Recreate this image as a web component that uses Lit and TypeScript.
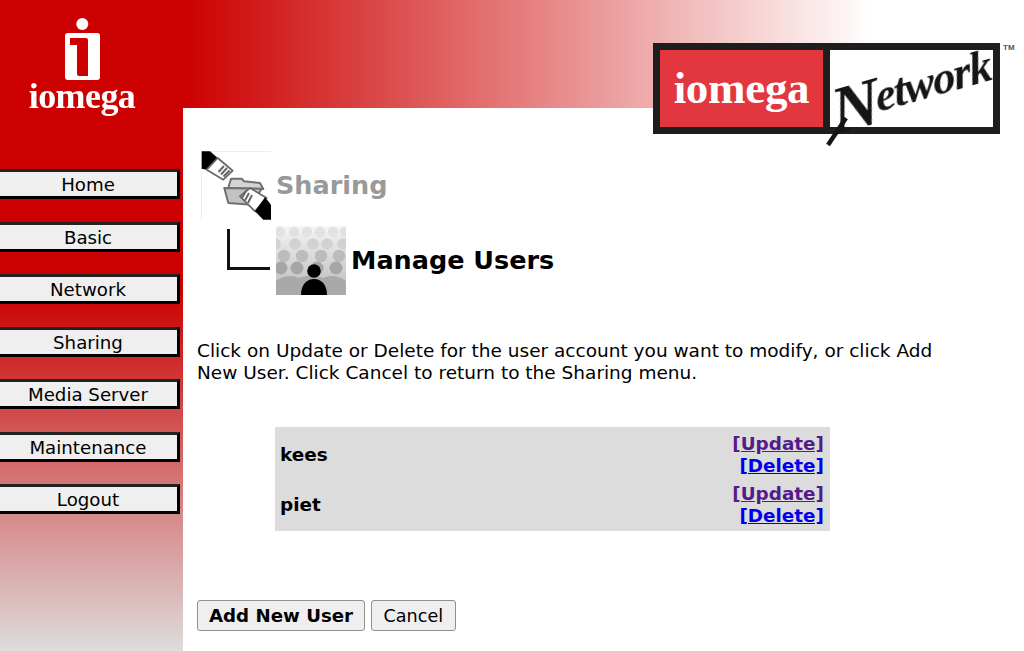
import { LitElement, html, svg, css } from "lit";
import { customElement } from "lit/decorators.js";

const NAV = ["Home", "Basic", "Network", "Sharing", "Media Server", "Maintenance", "Logout"];
const USERS = ["kees", "piet"];

@customElement("app-root")
export class AppRoot extends LitElement {
  static styles = css`
    :host {
      display: grid;
      grid-template-columns: 183px 1fr;
      grid-template-rows: 108px 1fr;
      width: 1024px;
      height: 651px;
      overflow: hidden;
      position: relative;
      background: #fff;
      font-family: "DejaVu Sans", sans-serif;
      font-size: 18.5px;
      line-height: 22px;
      color: #000;
    }
    .side {
      grid-row: 1 / 3;
      display: flex;
      flex-direction: column;
      background: linear-gradient(180deg, #cc0000 0, #cc0000 290px, #dedcdc 651px);
    }
    .brand {
      height: 169px;
      display: flex;
      flex-direction: column;
      align-items: center;
      padding: 18px 19px 0 0;
      box-sizing: border-box;
      filter: blur(0.4px);
    }
    .mark { width: 37px; height: 62px; display: block; }
    .brand-word {
      font-family: "Liberation Serif", serif;
      font-weight: 700;
      font-size: 36px;
      line-height: 30px;
      color: #fff;
      letter-spacing: -0.6px;
      margin-top: 1px;
    }
    nav {
      display: flex;
      flex-direction: column;
      gap: 22.5px;
      margin-left: -4px;
    }
    nav button {
      width: 184px;
      height: 30px;
      box-sizing: border-box;
      background: #efefef;
      border: 3px solid #000;
      border-top-color: #222;
      border-left-color: #222;
      font: inherit;
      font-size: 18.2px;
      color: #000;
      padding: 2px 0 0;
      line-height: 22px;
    }
    header {
      background: linear-gradient(90deg, #cc0000 0, #ffffff 690px);
    }
    .nlogo {
      position: absolute;
      left: 653px;
      top: 43px;
      width: 347px;
      height: 91px;
      box-sizing: border-box;
      background: #1e1e1e;
      padding: 7px;
      display: grid;
      grid-template-columns: 163px 163px;
      gap: 7px;
      filter: blur(0.5px);
    }
    .nred {
      background: #e2373e;
      display: flex;
      align-items: center;
      justify-content: center;
      color: #fff;
      font-family: "Liberation Serif", serif;
      font-weight: 700;
      font-size: 45px;
      letter-spacing: -0.3px;
      line-height: 1;
      padding: 0 0 1px 0;
      box-sizing: border-box;
    }
    .nwhite { background: #fff; position: relative; }
    .script {
      position: absolute;
      left: 6px;
      top: 15px;
      font-family: "Liberation Serif", serif;
      font-style: italic;
      font-weight: 700;
      font-size: 46px;
      line-height: 1;
      color: #151515;
      letter-spacing: -1.5px;
      transform: rotate(-16deg) skewX(-6deg);
      transform-origin: 10px 60px;
      white-space: nowrap;
    }
    .script b {
      display: inline-block;
      font-size: 68px;
      font-weight: 700;
      letter-spacing: -5px;
      transform: translate(-2px, 10px);
    }
    .tail { position: absolute; left: -6px; top: 50px; width: 30px; height: 45px; overflow: visible; }
    .tm {
      position: absolute;
      left: 1003px;
      top: 43px;
      font-family: "Liberation Sans", sans-serif;
      font-weight: 700;
      font-size: 8px;
      line-height: 10px;
      color: #555;
    }
    main {
      padding: 43px 0 0 14px;
      display: flex;
      flex-direction: column;
      align-items: flex-start;
    }
    .head {
      display: flex;
      align-items: center;
      gap: 5px;
      height: 69px;
      padding-left: 4px;
    }
    .head svg { display: block; flex: none; filter: blur(0.4px); }
    .level2 { margin-top: 6px; }
    h1, h2 { margin: 0; font-weight: 700; line-height: 1; font-size: 25.5px; }
    h1 { color: #999; padding-top: 1px; }
    h2 { color: #000; }
    p {
      margin: 45px 0 0;
      width: 745px;
    }
    .users {
      margin: 43px 0 0 78px;
      width: 555px;
      box-sizing: border-box;
      padding: 2.5px 0;
      background: #dcdcdc;
      font-size: 18.4px;
      font-weight: 700;
    }
    table { width: 100%; border-collapse: collapse; }
    td { padding: 3.5px 6px 2px; height: 44px; }
    td:first-child { padding-left: 5px; }
    td + td { text-align: right; }
    td a { color: #0000ee; text-decoration: underline; }
    td a.seen { color: #551a8b; }
    .actions {
      margin-top: 69px;
      display: flex;
      gap: 6px;
    }
    .actions button {
      height: 31px;
      box-sizing: border-box;
      padding: 1px 11.500px 0;
      font: inherit;
      font-size: 17.600px;
      color: #000;
      background: #efefef;
      border: 1px solid #8f8f8f;
      border-radius: 3px;
    }
    .actions .primary { font-weight: 700; font-size: 18.200px; padding: 1px 11px 0; }
  `;

  private sharingIcon() {
    return html`<svg width="70" height="69" viewBox="0 0 70 69">
      <path d="M0.5 69V0.5H70" fill="none" stroke="#eee"/>
      <path d="M0.7 0.3H9L16.7 7L5.7 18.700L0.7 17.700Z" fill="#000"/>
      <path d="M16.700 7L31.700 19.700L22.300 28.700L5.700 18.700Z" fill="#fff" stroke="#6a6a6a" stroke-width="1.800" stroke-linejoin="round"/>
      <path d="M23 15L17.500 21M26 17L20 23.500M28.500 19.500L22.500 25.500" stroke="#666" stroke-width="2"/>
      <path d="M27.300 37L30 27.700H40.700L43 30.300L59 32L62.300 38Z" fill="#d4d4d4" stroke="#707070" stroke-width="2" stroke-linejoin="round"/>
      <path d="M23.300 37L60.700 37.700L50.700 53.700L27.300 52Z" fill="#c2c2c2" stroke="#707070" stroke-width="2" stroke-linejoin="round"/>
      <path d="M39 45.300L49 37L65.700 47L54 60.300Z" fill="#fff" stroke="#6a6a6a" stroke-width="1.800" stroke-linejoin="round"/>
      <path d="M45 40L41 47M48 42L44 49.500M51 44L47 52" stroke="#666" stroke-width="2"/>
      <path d="M54 60.300L64 46.300L70 53.700V68.700H62.300Z" fill="#000"/>
    </svg>`;
  }

  private usersIcon() {
    const rows: [number, number, string, number[]][] = [
      [6, 5.2, "#e2e2e2", [4, 18, 31, 44, 57, 69]],
      [18, 5.8, "#d2d2d2", [-1, 19, 37, 51, 67]],
      [30, 6.2, "#bcbcbc", [8, 26, 45, 63]],
      [42, 6.5, "#a6a6a6", [5, 21, 41, 60]],
    ];
    return html`<svg width="70" height="69" viewBox="0 0 70 69">
      <defs>
        <linearGradient id="ug" x1="0" y1="0" x2="0" y2="1">
          <stop offset="0" stop-color="#f6f6f6"/>
          <stop offset="0.3" stop-color="#e2e2e2"/>
          <stop offset="0.65" stop-color="#cecece"/>
          <stop offset="1" stop-color="#bbb"/>
        </linearGradient>
      </defs>
      <rect width="70" height="69" fill="url(#ug)"/>
      ${rows.map(([y, r, c, xs]) =>
        xs.map((x) => svg`<circle cx=${x} cy=${y} r=${r} fill=${c}/>`))}
      <path d="M0 69V55Q12 47 23 52Q35 47 47 52Q58 47 70 55V69Z" fill="#a9a9a9"/>
      <circle cx="38" cy="45" r="6.800" fill="#000"/>
      <path d="M25 69C25 57 32 53 38 53C44 53 51 57 51 69Z" fill="#000"/>
    </svg>`;
  }

  render() {
    return html`
      <aside class="side">
        <div class="brand">
          <svg class="mark" viewBox="0 0 37 62">
            <circle cx="18.300" cy="6" r="6" fill="#fff"/>
            <path fill="#fff" fill-rule="evenodd" d="M4 15H33Q36 15 36 18V59Q36 62 33 62H4Q1 62 1 59V18Q1 15 4 15ZM6 20V27H13V56Q13 58 15 58H24V22Q24 20 22 20Z"/>
          </svg>
          <span class="brand-word">iomega</span>
        </div>
        <nav>${NAV.map((n) => html`<button>${n}</button>`)}</nav>
      </aside>
      <header></header>
      <main>
        <div class="head">${this.sharingIcon()}<h1>Sharing</h1></div>
        <div class="head level2">
          <svg width="70" height="69" viewBox="0 0 70 69">
            <path d="M27.500 3V42.500H69" fill="none" stroke="#111" stroke-width="3"/>
          </svg>
          ${this.usersIcon()}<h2>Manage Users</h2>
        </div>
        <p>Click on Update or Delete for the user account you want to modify, or click Add New User. Click Cancel to return to the Sharing menu.</p>
        <div class="users">
          <table>
            ${USERS.map((u) => html`<tr>
              <td>${u}</td>
              <td><a class="seen" href="#">[Update]</a><br /><a href="#">[Delete]</a></td>
            </tr>`)}
          </table>
        </div>
        <div class="actions">
          <button class="primary">Add New User</button>
          <button>Cancel</button>
        </div>
      </main>
      <div class="nlogo">
        <div class="nred">iomega</div>
        <div class="nwhite">
          <svg class="tail" viewBox="0 0 30 45"><path d="M22 18L4 45" stroke="#151515" stroke-width="4.500" fill="none"/></svg>
          <span class="script"><b>N</b>etwork</span>
        </div>
      </div>
      <span class="tm">TM</span>
    `;
  }
}
